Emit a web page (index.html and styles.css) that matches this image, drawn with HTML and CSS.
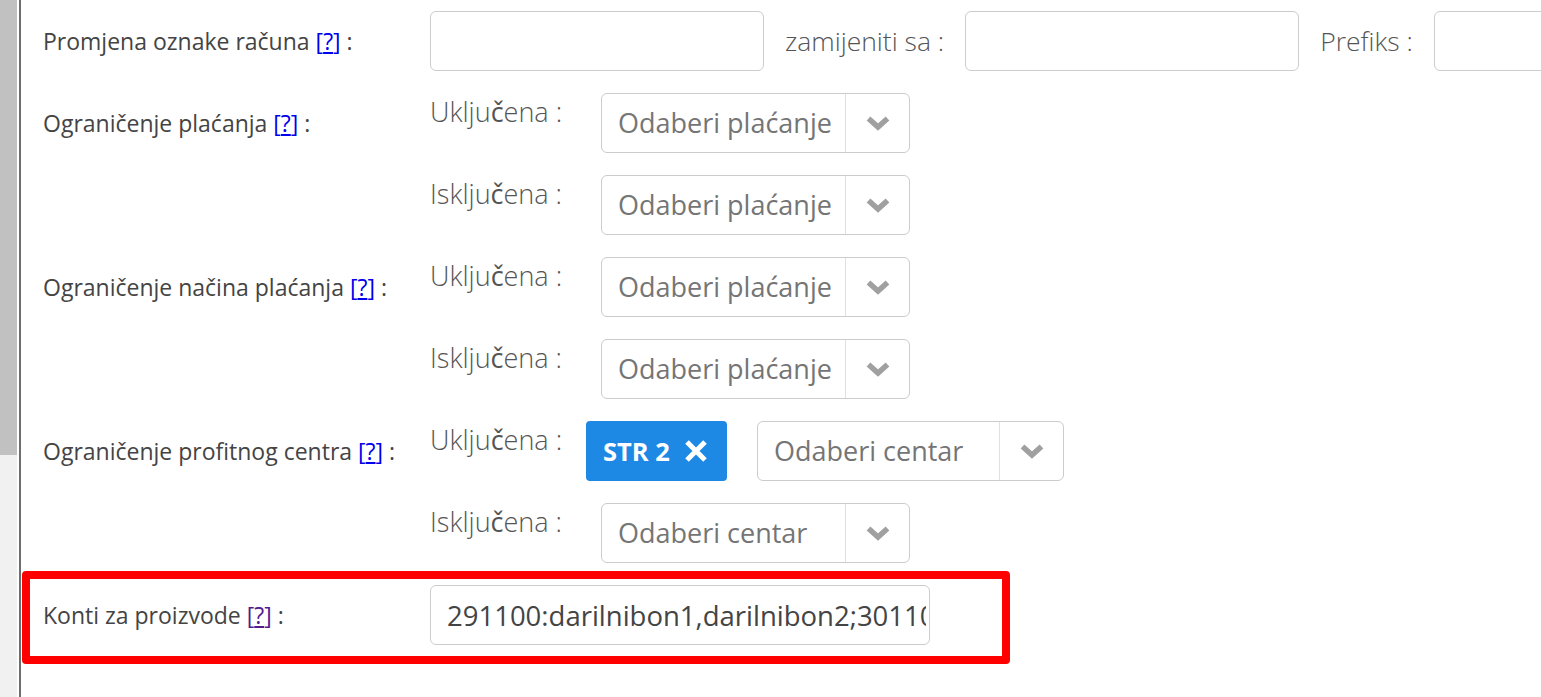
FILE: index.html
```html
<!DOCTYPE html>
<html lang="hr">
  <head>
    <meta charset="UTF-8" />
    <meta name="viewport" content="width=device-width, initial-scale=1.0" />
    <title>Postavke računa</title>
    <link rel="stylesheet" href="styles.css">
  </head>
  <body>
    <div class="page">
      <div class="scrollbar"><div class="thumb"></div></div>
      <main class="content">
        <div class="row">
          <div class="label">Promjena oznake računa <a class="help" href="#">[<span>?</span>]</a> :</div>
          <div class="fields">
            <input class="text-input" type="text" />
            <span class="inline-label">zamijeniti sa :</span>
            <input class="text-input" type="text" />
            <span class="inline-label">Prefiks :</span>
            <input class="text-input" type="text" />
          </div>
        </div>

        <div class="row">
          <div class="label">Ograničenje plaćanja <a class="help" href="#">[<span>?</span>]</a> :</div>
          <div class="sub-rows">
            <div class="sub-row">
              <span class="sub-label">Uklju<b>č</b>ena :</span>
              <div class="select">
                <span class="select-value">Odaberi plaćanje</span>
                <span class="select-arrow"><svg width="26" height="16" viewBox="0 0 26 16"><polyline points="3.5,3.5 13,12 22.5,3.5" fill="none" stroke="#a0a0a0" stroke-width="5.5"/></svg></span>
              </div>
            </div>
            <div class="sub-row">
              <span class="sub-label">Isklju<b>č</b>ena :</span>
              <div class="select">
                <span class="select-value">Odaberi plaćanje</span>
                <span class="select-arrow"><svg width="26" height="16" viewBox="0 0 26 16"><polyline points="3.5,3.5 13,12 22.5,3.5" fill="none" stroke="#a0a0a0" stroke-width="5.5"/></svg></span>
              </div>
            </div>
          </div>
        </div>

        <div class="row">
          <div class="label">Ograničenje načina plaćanja <a class="help" href="#">[<span>?</span>]</a> :</div>
          <div class="sub-rows">
            <div class="sub-row">
              <span class="sub-label">Uklju<b>č</b>ena :</span>
              <div class="select">
                <span class="select-value">Odaberi plaćanje</span>
                <span class="select-arrow"><svg width="26" height="16" viewBox="0 0 26 16"><polyline points="3.5,3.5 13,12 22.5,3.5" fill="none" stroke="#a0a0a0" stroke-width="5.5"/></svg></span>
              </div>
            </div>
            <div class="sub-row">
              <span class="sub-label">Isklju<b>č</b>ena :</span>
              <div class="select">
                <span class="select-value">Odaberi plaćanje</span>
                <span class="select-arrow"><svg width="26" height="16" viewBox="0 0 26 16"><polyline points="3.5,3.5 13,12 22.5,3.5" fill="none" stroke="#a0a0a0" stroke-width="5.5"/></svg></span>
              </div>
            </div>
          </div>
        </div>

        <div class="row">
          <div class="label">Ograničenje profitnog centra <a class="help" href="#">[<span>?</span>]</a> :</div>
          <div class="sub-rows">
            <div class="sub-row">
              <span class="sub-label">Uklju<b>č</b>ena :</span>
              <span class="tag">STR 2 <svg width="26" height="26" viewBox="0 0 26 26"><path d="M4 4 L22 22 M22 4 L4 22" stroke="#fff" stroke-width="5" fill="none"/></svg></span>
              <div class="select after-tag">
                <span class="select-value">Odaberi centar</span>
                <span class="select-arrow"><svg width="26" height="16" viewBox="0 0 26 16"><polyline points="3.5,3.5 13,12 22.5,3.5" fill="none" stroke="#a0a0a0" stroke-width="5.5"/></svg></span>
              </div>
            </div>
            <div class="sub-row">
              <span class="sub-label">Isklju<b>č</b>ena :</span>
              <div class="select">
                <span class="select-value">Odaberi centar</span>
                <span class="select-arrow"><svg width="26" height="16" viewBox="0 0 26 16"><polyline points="3.5,3.5 13,12 22.5,3.5" fill="none" stroke="#a0a0a0" stroke-width="5.5"/></svg></span>
              </div>
            </div>
          </div>
        </div>

        <div class="row highlight">
          <div class="label">Konti za proizvode <a class="help visited" href="#">[<span>?</span>]</a> :</div>
          <div class="fields">
            <input class="text-input long" type="text" value="291100:darilnibon1,darilnibon2;301100:darilnibon3" />
          </div>
        </div>
      </main>
    </div>
  </body>
</html>
```

FILE: styles.css
```css
body {
  margin: 0;
  font-family: "Open Sans", Arial, sans-serif;
  background-color: #fff;
  overflow: hidden;
}
.page {
  display: flex;
  min-height: 697px;
}
.scrollbar {
  width: 17px;
  flex: none;
  background-color: #f1f1f1;
}
.thumb {
  height: 455px;
  background-color: #c1c1c1;
}
.content {
  flex: 1;
  margin-left: 2px;
  border-left: 2px solid #6e6e6e;
  padding-top: 11px;
  display: flex;
  flex-direction: column;
  gap: 22px;
}
.row {
  display: flex;
  padding-left: 22px;
}
.label {
  width: 387px;
  flex: none;
  font-size: 23px;
  line-height: 60px;
  color: #444;
}
.help {
  color: #0000ee;
  text-decoration: none;
}
.help span {
  text-decoration: underline;
}
.help.visited {
  color: #551a8b;
}
.fields {
  display: flex;
  align-items: center;
  white-space: nowrap;
}
.text-input {
  flex: none;
  width: 334px;
  height: 60px;
  box-sizing: border-box;
  border: 1px solid #ccc;
  border-radius: 6px;
  font-family: inherit;
  font-size: 27.5px;
  color: #444;
  padding: 0 16px;
  outline: none;
}
.text-input.long {
  width: 500px;
  padding: 0 3px 0 16px;
}
.inline-label {
  margin: 0 21px;
  font-weight: 300;
  font-size: 26.5px;
  color: #555;
}
.sub-rows {
  display: flex;
  flex-direction: column;
  gap: 22px;
}
.sub-row {
  display: flex;
  align-items: flex-start;
}
.sub-label {
  width: 156px;
  flex: none;
  font-weight: 300;
  font-size: 27px;
  line-height: 38px;
  color: #555;
}
.sub-label b {
  font-weight: 400;
}
.select {
  margin-left: 15px;
  width: 309px;
  height: 60px;
  box-sizing: border-box;
  display: flex;
  border: 1px solid #ccc;
  border-radius: 6px;
}
.select.after-tag {
  margin-left: 30px;
  width: 307px;
}
.select-value {
  flex: 1;
  padding-left: 16px;
  font-size: 27px;
  line-height: 58px;
  color: #757575;
  white-space: nowrap;
}
.select-arrow {
  width: 63px;
  flex: none;
  border-left: 1px solid #e0e0e0;
  display: flex;
  align-items: center;
  justify-content: center;
}
.tag {
  width: 141px;
  height: 60px;
  box-sizing: border-box;
  padding-left: 17px;
  display: flex;
  align-items: center;
  gap: 13px;
  background-color: #1e88e5;
  border-radius: 4px;
  color: #fff;
  font-weight: 700;
  font-size: 25.5px;
}
.row.highlight {
  align-self: flex-start;
  width: 988px;
  box-sizing: border-box;
  margin: -14px 0 0 1px;
  padding: 6px 0 11px 13px;
  border: 8px solid #ff0000;
  border-radius: 4px;
}
```
